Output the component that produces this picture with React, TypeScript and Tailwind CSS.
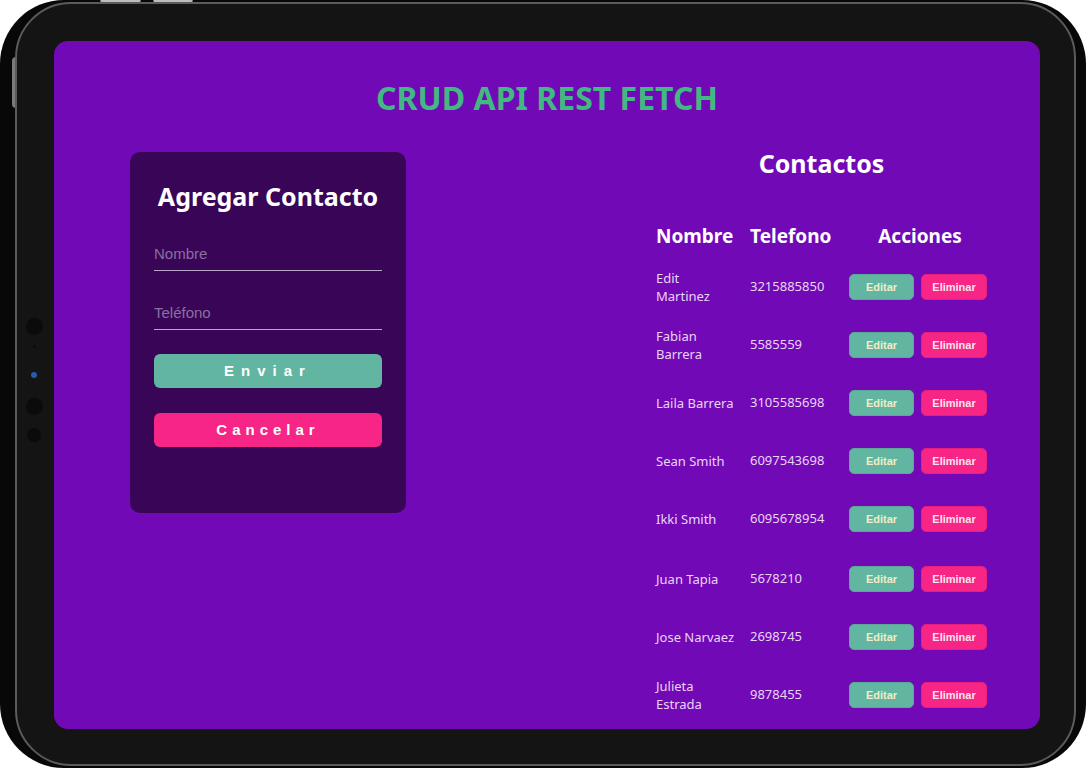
import React from 'react';

type Contact = { name: string[]; phone: string };

const contacts: Contact[] = [
  { name: ['Edit', 'Martinez'], phone: '3215885850' },
  { name: ['Fabian', 'Barrera'], phone: '5585559' },
  { name: ['Laila Barrera'], phone: '3105585698' },
  { name: ['Sean Smith'], phone: '6097543698' },
  { name: ['Ikki Smith'], phone: '6095678954' },
  { name: ['Juan Tapia'], phone: '5678210' },
  { name: ['Jose Narvaez'], phone: '2698745' },
  { name: ['Julieta', 'Estrada'], phone: '9878455' },
];

const sans = "font-['Noto_Sans','Open_Sans',sans-serif]";
const arial = "font-['Liberation_Sans',Arial,sans-serif]";

const ContactForm: React.FC = () => (
  <div className="mt-[5px] ml-[76px] w-[276px] rounded-[10px] bg-[#390557] px-6 pt-[27px] pb-[66px] flex flex-col">
    <h2 className={`${sans} -mx-4 whitespace-nowrap text-[25px] leading-[34px] font-bold text-white text-center`}>
      Agregar Contacto
    </h2>
    <input
      placeholder="Nombre"
      className={`${arial} mt-[23px] h-[35px] bg-transparent border-b border-[#b9a6c9] text-[15px] text-white placeholder:text-[#8b6ea3] outline-none`}
    />
    <input
      placeholder="Teléfono"
      className={`${arial} mt-[24px] h-[35px] bg-transparent border-b border-[#b9a6c9] text-[15px] text-white placeholder:text-[#8b6ea3] outline-none`}
    />
    <button className={`${arial} mt-[24px] h-[34px] rounded-md bg-[#62b5a1] text-white font-bold text-[15px] tracking-[7px]`}>
      Enviar
    </button>
    <button className={`${arial} mt-[25px] h-[34px] rounded-md bg-[#f72585] text-white font-bold text-[15px] tracking-[5px]`}>
      Cancelar
    </button>
  </div>
);

const ContactTable: React.FC = () => (
  <div className="mr-[53px] w-[331px]">
    <h2 className={`${sans} text-[25px] leading-[32px] font-bold text-white text-center`}>Contactos</h2>
    <div className={`${sans} mt-[44px] grid grid-cols-[94px_99px_138px] text-[19px] leading-[26px] font-bold text-white`}>
      <span>Nombre</span>
      <span>Telefono</span>
      <span className="text-center pl-1">Acciones</span>
    </div>
    <div className="mt-[9px] flex flex-col">
      {contacts.map((c, i) => (
        <div
          key={c.phone}
          className={`grid grid-cols-[94px_99px_138px] items-center h-[58px] ${i === 5 ? 'mt-[2px]' : ''}`}
        >
          <span className={`${sans} text-[13px] leading-[18px] text-[#e8d5f2]`}>
            {c.name.map((l) => (
              <span key={l} className="block">{l}</span>
            ))}
          </span>
          <span className={`${sans} text-[13px] text-[#e8d5f2]`}>{c.phone}</span>
          <div className="flex gap-[7px]">
            <button className={`${arial} w-[65px] h-[26px] rounded-[5px] bg-[#62b5a1] border border-[#5aa894] text-[11px] font-bold text-[#f2ecc8]`}>
              Editar
            </button>
            <button className={`${arial} w-[66px] h-[26px] rounded-[5px] bg-[#f72585] border border-[#e8207c] text-[11px] font-bold text-[#fbe3ee]`}>
              Eliminar
            </button>
          </div>
        </div>
      ))}
    </div>
  </div>
);

export default function App() {
  return (
    <div className="w-[1086px] h-[768px] bg-white overflow-hidden">
      <div className="relative h-full rounded-[64px] bg-[#080808] pl-[15px] pr-[10px] pt-[2px] pb-[2px]">
        {/* hardware buttons */}
        <div className="absolute top-0 left-[100px] w-[41px] h-[3px] rounded-b-sm bg-[#bdbdbd] border-x border-[#777]" />
        <div className="absolute top-0 left-[153px] w-[40px] h-[3px] rounded-b-sm bg-[#bdbdbd] border-x border-[#777]" />
        <div className="absolute top-[57px] left-[12px] w-[4px] h-[51px] rounded-l-sm bg-[#7a7a7a]" />

        <div className="relative h-full rounded-[56px] border-2 border-[#5b5b5b] bg-[#141414] pl-[37px] pr-[34px] pt-[37px] pb-[35px]">
          {/* camera / sensors */}
          <div className="absolute left-[8px] top-[314px] w-[18px] flex flex-col items-center">
            <span className="w-[17px] h-[17px] rounded-full bg-[#0b0b0b]" />
            <span className="mt-[10px] w-[3px] h-[3px] rounded-full bg-[#0a0a0a]" />
            <span className="mt-[24px] w-[6px] h-[6px] rounded-full bg-[#2a5aa8]" />
            <span className="mt-[20px] w-[17px] h-[17px] rounded-full bg-[#0b0b0b]" />
            <span className="mt-[13px] w-[14px] h-[14px] rounded-full bg-[#0b0b0b]" />
          </div>

          <div className="h-full rounded-[14px] bg-[#7209b7] overflow-hidden flex flex-col">
            <h1 className={`${sans} pt-[38px] text-[32px] leading-[38px] font-bold text-[#42b883] text-center`}>
              CRUD API REST FETCH
            </h1>
            <div className="mt-[30px] flex items-start justify-between">
              <ContactForm />
              <ContactTable />
            </div>
          </div>
        </div>
      </div>
    </div>
  );
}
